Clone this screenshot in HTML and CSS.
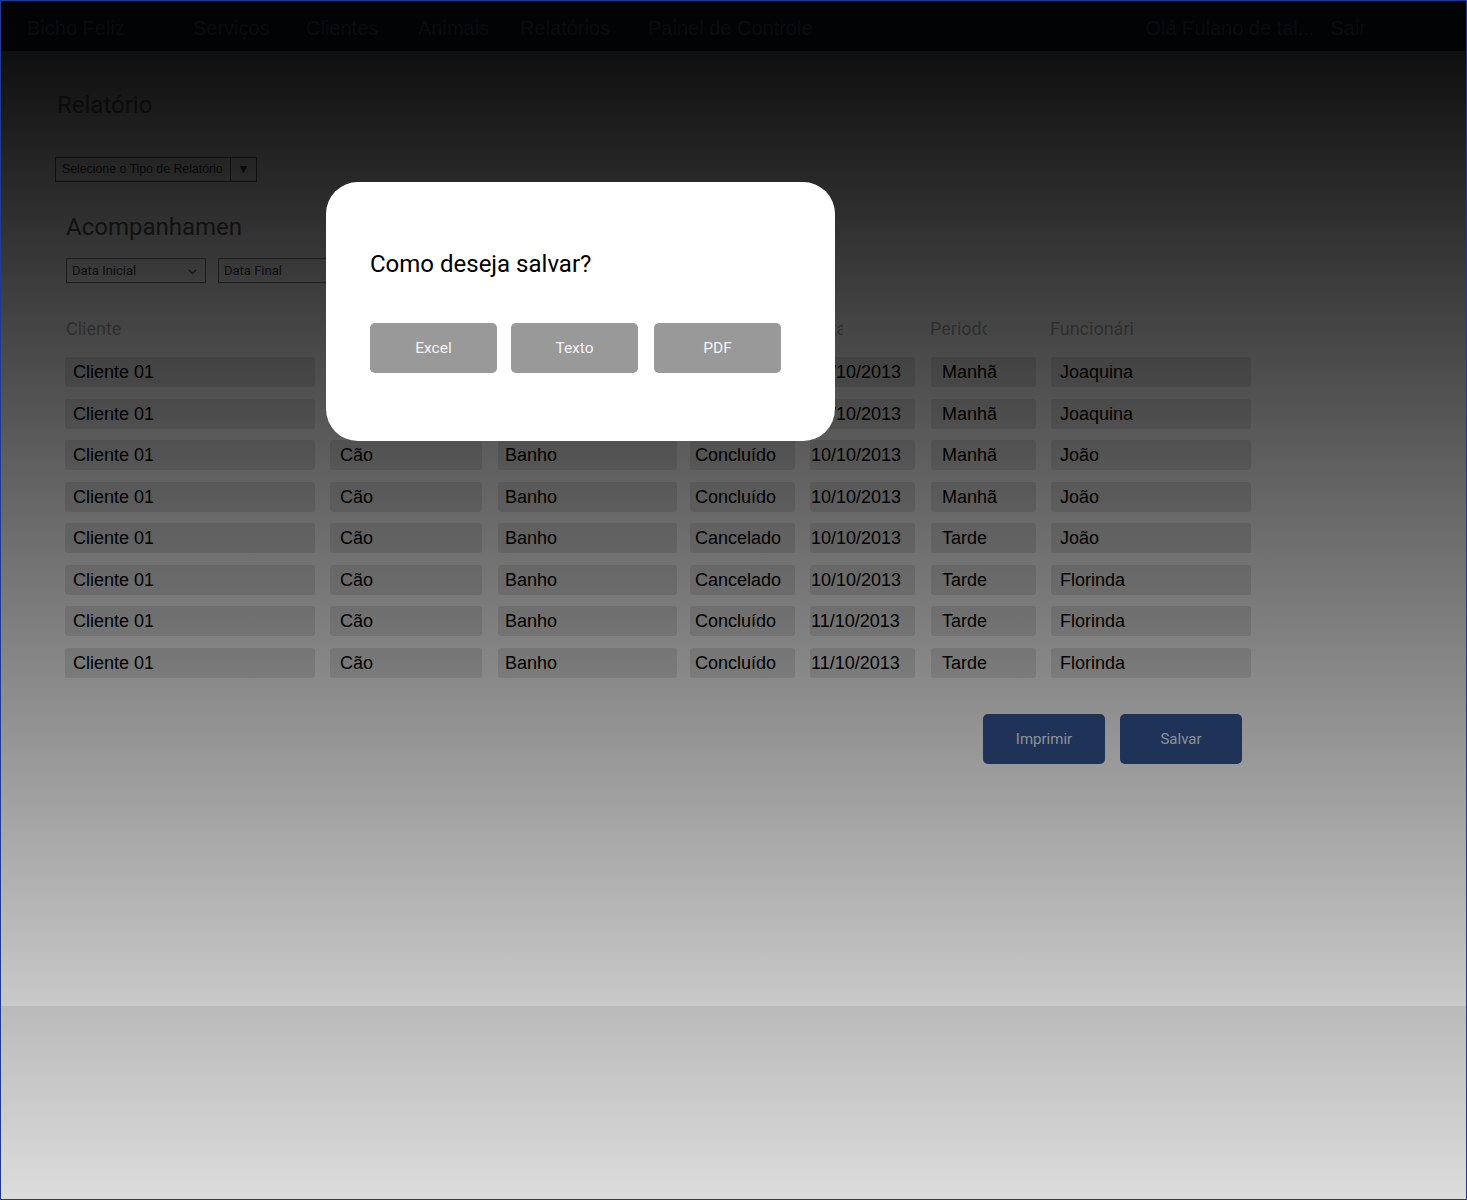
FILE: index.html
```html
<!DOCTYPE html>
<html lang="pt-BR">
<head>
<meta charset="utf-8">
<title>Relatório - Bicho Feliz</title>
<link rel="stylesheet" href="styles.css">
</head>
<body>
<div class="frame">
  <div class="page">
    <nav class="topnav">
      <span class="nav-item brand">Bicho Feliz</span>
      <span class="nav-item w-servicos">Serviços</span>
      <span class="nav-item w-clientes">Clientes</span>
      <span class="nav-item w-animais">Animais</span>
      <span class="nav-item w-relatorios">Relatórios</span>
      <span class="nav-item">Painel de Controle</span>
      <div class="nav-right">
        <span class="nav-item w-user">Olá Fulano de tal...</span>
        <span class="nav-item">Sair</span>
      </div>
    </nav>

    <main class="content">
      <h1 class="title">Relatório</h1>
      <div class="type-select">
        <span class="type-label">Selecione o Tipo de Relatório</span>
        <span class="type-arrow">▼</span>
      </div>

      <section class="report">
        <h2 class="report-title">Acompanhamento</h2>
        <div class="filters">
          <div class="filter">
            <span>Data Inicial</span>
            <svg class="chev" width="9" height="6" viewBox="0 0 9 6"><polyline points="1,1 4.5,4.5 8,1" fill="none" stroke="#161616" stroke-width="1.3"/></svg>
          </div>
          <div class="filter">
            <span>Data Final</span>
          </div>
        </div>

        <div class="thead">
          <div class="th th-1">Cliente</div>
          <div class="th th-2">Animal</div>
          <div class="th th-3">Serviço</div>
          <div class="th th-4">Status</div>
          <div class="th th-5">Data</div>
          <div class="th th-6">Periodo</div>
          <div class="th th-7">Funcionário</div>
        </div>

        <div class="tbody">
          <div class="tr"><div class="td c1">Cliente 01</div><div class="td c2">Cão</div><div class="td c3">Banho</div><div class="td c4">Concluído</div><div class="td c5">10/10/2013</div><div class="td c6">Manhã</div><div class="td c7">Joaquina</div></div>
          <div class="tr"><div class="td c1">Cliente 01</div><div class="td c2">Cão</div><div class="td c3">Banho</div><div class="td c4">Concluído</div><div class="td c5">10/10/2013</div><div class="td c6">Manhã</div><div class="td c7">Joaquina</div></div>
          <div class="tr"><div class="td c1">Cliente 01</div><div class="td c2">Cão</div><div class="td c3">Banho</div><div class="td c4">Concluído</div><div class="td c5">10/10/2013</div><div class="td c6">Manhã</div><div class="td c7">João</div></div>
          <div class="tr"><div class="td c1">Cliente 01</div><div class="td c2">Cão</div><div class="td c3">Banho</div><div class="td c4">Concluído</div><div class="td c5">10/10/2013</div><div class="td c6">Manhã</div><div class="td c7">João</div></div>
          <div class="tr"><div class="td c1">Cliente 01</div><div class="td c2">Cão</div><div class="td c3">Banho</div><div class="td c4">Cancelado</div><div class="td c5">10/10/2013</div><div class="td c6">Tarde</div><div class="td c7">João</div></div>
          <div class="tr"><div class="td c1">Cliente 01</div><div class="td c2">Cão</div><div class="td c3">Banho</div><div class="td c4">Cancelado</div><div class="td c5">10/10/2013</div><div class="td c6">Tarde</div><div class="td c7">Florinda</div></div>
          <div class="tr"><div class="td c1">Cliente 01</div><div class="td c2">Cão</div><div class="td c3">Banho</div><div class="td c4">Concluído</div><div class="td c5">11/10/2013</div><div class="td c6">Tarde</div><div class="td c7">Florinda</div></div>
          <div class="tr"><div class="td c1">Cliente 01</div><div class="td c2">Cão</div><div class="td c3">Banho</div><div class="td c4">Concluído</div><div class="td c5">11/10/2013</div><div class="td c6">Tarde</div><div class="td c7">Florinda</div></div>
        </div>

        <div class="actions">
          <button class="btn-dark">Imprimir</button>
          <button class="btn-dark">Salvar</button>
        </div>
      </section>
    </main>

    <div class="modal">
      <h3 class="modal-title">Como deseja salvar?</h3>
      <div class="modal-actions">
        <button class="btn-grey">Excel</button>
        <button class="btn-grey">Texto</button>
        <button class="btn-grey">PDF</button>
      </div>
    </div>
  </div>
  <div class="below"></div>
</div>
</body>
</html>
```

FILE: styles.css
```css
* { box-sizing: border-box; }

html, body {
  margin: 0;
  padding: 0;
}

body {
  width: 1467px;
  height: 1200px;
  overflow: hidden;
  font-family: Roboto, "Liberation Sans", Arial, sans-serif;
}

.frame {
  width: 1467px;
  height: 1200px;
  border: 1px solid #1f3a93;
  display: flex;
  flex-direction: column;
}

.page {
  position: relative;
  height: 1005px;
  flex: none;
  background: linear-gradient(#050505, #c9c9c9);
}

.below {
  flex: 1;
  background: linear-gradient(#bababa, #dcdcdc);
}

/* ---------- top navigation ---------- */
.topnav {
  height: 50px;
  padding: 4px 100px 0 26px;
  display: flex;
  align-items: center;
  background: #020305;
  font-family: "Liberation Sans", Arial, sans-serif;
  font-size: 20px;
  color: #0a0b0e;
  white-space: nowrap;
}

.nav-item { display: inline-block; }
.brand { width: 166px; }
.w-servicos { width: 113px; }
.w-clientes { width: 112px; }
.w-animais { width: 102px; }
.w-relatorios { width: 128px; }
.w-user { width: 185px; }

.nav-right {
  margin-left: auto;
  display: flex;
}

/* ---------- content ---------- */
.content {
  padding: 40px 0 0 56px;
}

.title {
  margin: 0;
  font-size: 24px;
  line-height: 28px;
  font-weight: 400;
  color: #0c0c0c;
}

.type-select {
  margin: 38px 0 0 -2px;
  display: flex;
  width: 202px;
  height: 25px;
  border: 1px solid #0f0f0f;
}

.type-label {
  width: 175px;
  border-right: 1px solid #0f0f0f;
  padding-left: 6px;
  font-family: "Liberation Sans", Arial, sans-serif;
  font-size: 12.3px;
  line-height: 23px;
  color: #090909;
  white-space: nowrap;
}

.type-arrow {
  flex: 1;
  text-align: center;
  font-size: 12px;
  line-height: 23px;
  color: #080808;
}

.report {
  margin-left: 8px;
}

.report-title {
  margin: 31px 0 0 1px;
  width: 176px;
  overflow: hidden;
  white-space: nowrap;
  font-size: 24px;
  line-height: 28px;
  font-weight: 400;
  color: #111;
}

.filters {
  display: flex;
  gap: 12px;
  margin: 17px 0 0 1px;
}

.filter {
  width: 140px;
  height: 25px;
  border: 1px solid #1d1d1d;
  padding: 0 8px 0 5px;
  display: flex;
  align-items: center;
  justify-content: space-between;
  font-size: 13px;
  color: #0d0d0d;
}

.chev { margin-top: 2px; }

/* ---------- table ---------- */
.thead,
.tr {
  display: grid;
  grid-template-columns: 265px 168px 192px 120px 121px 120px 200px;
}

.thead {
  margin-top: 35px;
  font-size: 18px;
  line-height: 21px;
  color: rgba(0, 0, 0, 0.35);
}

.th {
  overflow: hidden;
  white-space: nowrap;
}

.th-1 { padding-left: 1px; }
.th-5 { width: 34px; margin-left: -1px; }
.th-6 { width: 57px; margin-left: -1px; }
.th-7 { width: 85px; margin-left: -1px; }

.tbody {
  margin-top: 18px;
  display: flex;
  flex-direction: column;
  gap: 11.5px;
}

.tr { height: 30px; }

.td {
  height: 30px;
  line-height: 31px;
  background: rgba(0, 0, 0, 0.1);
  border-radius: 3px;
  font-family: "Liberation Sans", Arial, sans-serif;
  font-size: 18px;
  color: #000;
  white-space: nowrap;
  overflow: hidden;
}

.c1 { width: 250px; padding-left: 8px; }
.c2 { width: 152px; padding-left: 10px; }
.c3 { width: 179px; padding-left: 7px; }
.c4 { width: 105px; padding-left: 5px; }
.c5 { width: 105px; padding-left: 1px; }
.c6 { width: 105px; padding-left: 11px; }
.c7 { width: 200px; padding-left: 9px; }

/* ---------- actions ---------- */
.actions {
  display: flex;
  justify-content: flex-end;
  gap: 15px;
  width: 1186px;
  padding-right: 9px;
  margin-top: 36.5px;
}

.btn-dark {
  width: 122px;
  height: 50px;
  border: 0;
  border-radius: 5px;
  background: #1f3258;
  color: #8d929a;
  font-family: Roboto, sans-serif;
  font-size: 15px;
  padding: 0;
}

/* ---------- modal ---------- */
.modal {
  position: absolute;
  left: 325px;
  top: 181px;
  width: 509px;
  height: 259px;
  background: #fff;
  border-radius: 32px;
  padding: 68px 44px 0;
}

.modal-title {
  margin: 0;
  font-size: 24px;
  line-height: 28px;
  font-weight: 400;
  color: #000;
}

.modal-actions {
  margin-top: 45px;
  display: flex;
  gap: 14px;
}

.btn-grey {
  width: 127px;
  height: 50px;
  border: 0;
  border-radius: 5px;
  background: #999;
  color: #f4f4f4;
  font-family: Roboto, sans-serif;
  font-size: 15.5px;
  padding: 0;
}

.btn-grey:last-child { margin-left: 2px; }
```
